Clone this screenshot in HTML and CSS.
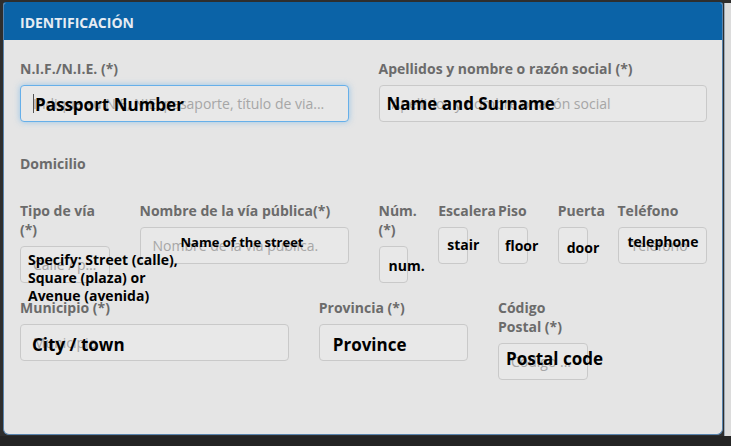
FILE: index.html
```html
<!DOCTYPE html>
<html lang="es">
<head>
    <meta charset="UTF-8">
    <meta name="viewport" content="width=device-width, initial-scale=1.0">
    <title>Identificación</title>
    <link rel="stylesheet" href="styles.css">
</head>
<body>
    <div class="screen">
        <div class="panel">
            <div class="panel-heading">IDENTIFICACIÓN</div>
            <div class="panel-body">
                <div class="row">
                    <div class="field span-6">
                        <label>N.I.F./N.I.E. (*)</label>
                        <div class="control">
                            <input type="text" class="focused" placeholder="Indique su NIF, NIE, pasaporte, título de via...">
                            <span class="caret"></span>
                            <span class="note note-lg note-passport">Passport Number</span>
                        </div>
                    </div>
                    <div class="field span-6">
                        <label>Apellidos y nombre o razón social (*)</label>
                        <div class="control">
                            <input type="text" placeholder="Apellidos y nombre o razón social">
                            <span class="note note-lg note-surname">Name and Surname</span>
                        </div>
                    </div>
                </div>

                <div class="section-title">Domicilio</div>

                <!-- Address line -->
                <div class="row row-address">
                    <div class="field span-2">
                        <label>Tipo de vía (*)</label>
                        <div class="control">
                            <input type="text" placeholder="Calle / p...">
                            <span class="note note-specify">Specify: Street (calle),<br>Square (plaza) or<br>Avenue (avenida)</span>
                        </div>
                    </div>
                    <div class="field span-4">
                        <label>Nombre de la vía pública(*)</label>
                        <div class="control">
                            <input type="text" placeholder="Nombre de la vía pública.">
                            <span class="note note-sm note-street">Name of the street</span>
                        </div>
                    </div>
                    <div class="field span-1">
                        <label>Núm. (*)</label>
                        <div class="control">
                            <input type="text">
                            <span class="note note-sm note-num">num.</span>
                        </div>
                    </div>
                    <div class="field span-1">
                        <label>Escalera</label>
                        <div class="control">
                            <input type="text">
                            <span class="note note-sm note-stair">stair</span>
                        </div>
                    </div>
                    <div class="field span-1">
                        <label>Piso</label>
                        <div class="control">
                            <input type="text">
                            <span class="note note-sm note-floor">floor</span>
                        </div>
                    </div>
                    <div class="field span-1">
                        <label>Puerta</label>
                        <div class="control">
                            <input type="text">
                            <span class="note note-sm note-door">door</span>
                        </div>
                    </div>
                    <div class="field span-2">
                        <label>Teléfono</label>
                        <div class="control">
                            <input type="text" placeholder="Teléfono">
                            <span class="note note-sm note-phone">telephone</span>
                        </div>
                    </div>
                </div>

                <div class="row row-town">
                    <div class="field span-5">
                        <label>Municipio (*)</label>
                        <div class="control">
                            <input type="text" placeholder="Municipio">
                            <span class="note note-lg note-city">City / town</span>
                        </div>
                    </div>
                    <div class="field span-3">
                        <label>Provincia (*)</label>
                        <div class="control">
                            <input type="text">
                            <span class="note note-lg note-province">Province</span>
                        </div>
                    </div>
                    <div class="field span-2">
                        <label>Código<br>Postal (*)</label>
                        <div class="control">
                            <input type="text" placeholder="Código ...">
                            <span class="note note-lg note-postal">Postal code</span>
                        </div>
                    </div>
                </div>
            </div>
        </div>
        <div class="edge"></div>
    </div>
</body>
</html>
```

FILE: styles.css
```css
/* Base */
* {
    margin: 0;
    padding: 0;
    box-sizing: border-box;
}

body {
    width: 731px;
    height: 446px;
    overflow: hidden;
    background: #242424;
    font-family: 'Open Sans', sans-serif;
}

.screen {
    display: flex;
    height: 436px;
    padding: 2px 0 0 3px;
    background: #2e2e2e;
}

.edge {
    flex: 1;
    margin: 1px 0 0 1px;
    background: #dcdcdc;
    border-left: 1px solid #9aa7b4;
}

/* Panel */
.panel {
    width: 720px;
    height: 433px;
    background: #e5e5e5;
    border: 1px solid #5883ad;
    border-top-color: #0b63a7;
    border-radius: 3px 3px 6px 6px;
    overflow: hidden;
}

.panel-heading {
    height: 37px;
    display: flex;
    align-items: center;
    padding: 1px 16px 0;
    background: #0b63a7;
    color: #e6ecf3;
    font-size: 14px;
    font-weight: 700;
}

.panel-body {
    padding: 19px 15px 0 16px;
}

/* Grid */
.row {
    display: grid;
    grid-template-columns: repeat(12, 1fr);
    column-gap: 30px;
    align-items: start;
}

.row-address {
    margin-top: 28px;
}

.row-town {
    margin-top: 15px;
}

.span-1 { grid-column: span 1; }
.span-2 { grid-column: span 2; }
.span-3 { grid-column: span 3; }
.span-4 { grid-column: span 4; }
.span-5 { grid-column: span 5; }
.span-6 { grid-column: span 6; }

/* Fields */
.field {
    min-width: 0;
}

.field label,
.section-title {
    display: block;
    font-size: 14px;
    font-weight: 700;
    line-height: 19px;
    color: #6b6b6b;
}

.field label {
    margin-bottom: 7px;
}

.section-title {
    margin-top: 32px;
}

.control {
    position: relative;
}

.control input {
    display: block;
    width: 100%;
    height: 37px;
    padding: 0 12px;
    border: 1px solid #c9c9c9;
    border-radius: 4px;
    background: #e8e8e8;
    font-family: 'Open Sans', sans-serif;
    font-size: 14px;
    color: #555;
    text-overflow: ellipsis;
    outline: none;
}

.control input::placeholder {
    color: #a6a6a6;
}

.control input.focused {
    border-color: #66afe9;
    box-shadow: 0 0 6px rgba(102, 175, 233, 0.6);
}

.caret {
    position: absolute;
    left: 13px;
    top: 9px;
    width: 1px;
    height: 19px;
    background: #555;
}

/* Annotations laid over the inputs */
.note {
    position: absolute;
    color: #000;
    font-weight: 700;
    white-space: nowrap;
    line-height: 1;
    transform: translateY(-50%);
}

.note-lg {
    font-size: 17px;
}

.note-sm {
    font-size: 14px;
}

.note-passport { left: 15px; top: 18.5px; }
.note-surname { left: 8px; top: 17.5px; }
.note-street { left: 41px; top: 15px; font-size: 13px; }
.note-num { left: 10px; top: 19.5px; }
.note-stair { left: 9px; top: 18px; }
.note-floor { left: 7px; top: 19px; }
.note-door { left: 9px; top: 20.5px; }
.note-phone { left: 10px; top: 15px; }
.note-city { left: 12px; top: 20px; }
.note-province { left: 14px; top: 20px; }
.note-postal { left: 8px; top: 15px; }

.note-specify {
    left: 8px;
    top: 5px;
    font-size: 14px;
    line-height: 18px;
    transform: none;
    z-index: 1;
}
```
